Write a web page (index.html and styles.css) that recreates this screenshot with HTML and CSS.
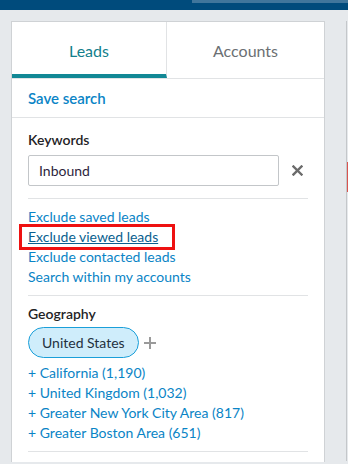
FILE: index.html
```html
<!DOCTYPE html>
<html lang="en">
<head>
  <meta charset="UTF-8" />
  <title>Lead search</title>
  <link rel="stylesheet" href="styles.css">
</head>
<body>
  <div class="topbar">
    <div class="topbar-strip"></div>
  </div>

  <div class="page">
    <div class="card">
      <div class="tabs">
        <div class="tab active">Leads</div>
        <div class="tab">Accounts</div>
      </div>

      <div class="save-row">
        <a class="save-link">Save search</a>
      </div>

      <div class="section keywords">
        <div class="label">Keywords</div>
        <div class="keyword-row">
          <input class="keyword-input" type="text" value="Inbound" />
          <svg class="clear-icon" width="11" height="11" viewBox="0 0 11 11">
            <path d="M1.5 1.5 L9.5 9.5 M9.5 1.5 L1.5 9.5" stroke="#6b6b6b" stroke-width="2.4" stroke-linecap="square" />
          </svg>
        </div>
      </div>

      <div class="section links">
        <a class="link">Exclude saved leads</a>
        <a class="link highlighted">Exclude viewed leads</a>
        <a class="link">Exclude contacted leads</a>
        <a class="link">Search within my accounts</a>
      </div>

      <div class="section geo">
        <div class="label">Geography</div>
        <div class="pill-row">
          <span class="pill">United States</span>
          <svg class="plus-icon" width="14" height="14" viewBox="0 0 14 14">
            <path d="M7 1 V13 M1 7 H13" stroke="#9a9a9a" stroke-width="2" />
          </svg>
        </div>
        <a class="link">+ California (1,190)</a>
        <a class="link">+ United Kingdom (1,032)</a>
        <a class="link">+ Greater New York City Area (817)</a>
        <a class="link">+ Greater Boston Area (651)</a>
      </div>
    </div>

    <div class="side-panel">
      <div class="side-badge"></div>
    </div>
  </div>
</body>
</html>
```

FILE: styles.css
```css
body {
  margin: 0;
  background-color: #e6e9ec;
  font-family: Lato, "Open Sans", sans-serif;
  overflow: hidden;
}
.topbar {
  height: 10px;
  background-color: #004b7c;
  display: flex;
}
.topbar-strip {
  margin-left: auto;
  width: 156px;
  height: 3px;
  background-color: #40769c;
}
.page {
  display: flex;
  align-items: flex-start;
  padding: 11px 0 0 11px;
}
.card {
  width: 312px;
  background: white;
  border: 1px solid #cfd2d5;
  border-bottom: none;
  height: 440px;
  flex-shrink: 0;
}
.tabs {
  display: flex;
  border-bottom: 1px solid #e1e3e5;
}
.tab {
  flex: 1;
  height: 56px;
  display: flex;
  align-items: center;
  justify-content: center;
  font-size: 16px;
  color: #6b6f73;
  box-sizing: border-box;
}
.tab.active {
  flex: 0 0 155px;
  color: #137f8c;
  border-right: 1px solid #e1e3e5;
  border-bottom: 4px solid #128895;
  padding-top: 4px;
}
.save-row {
  height: 38px;
  display: flex;
  align-items: center;
  padding-left: 16px;
  border-bottom: 1px solid #e1e3e5;
}
.save-link {
  font-size: 15px;
  font-weight: 600;
  color: #0a84c6;
}
.section {
  margin: 0 16px;
  border-bottom: 1px solid #e1e3e5;
}
.label {
  font-size: 14px;
  line-height: 20px;
  font-weight: 600;
  color: #1f2326;
}
.keywords {
  padding: 12px 0;
}
.keyword-row {
  display: flex;
  align-items: center;
  margin-top: 5px;
}
.keyword-input {
  width: 251px;
  height: 31px;
  box-sizing: border-box;
  border: 1px solid #c3c6c9;
  border-radius: 2px;
  padding: 0 10px;
  font-family: Lato, "Open Sans", sans-serif;
  font-size: 14px;
  color: #2d1f3d;
}
.clear-icon {
  margin-left: 13px;
}
.links {
  padding: 8px 0;
  display: flex;
  flex-direction: column;
  align-items: flex-start;
}
.link {
  font-size: 14px;
  line-height: 20px;
  color: #0a84c6;
}
.highlighted {
  color: #0a5f8f;
  text-decoration: underline;
  outline: 3px solid #ee1111;
  margin-left: -6px;
  padding: 0 14px 0 6px;
}
.geo {
  padding: 8px 0;
  display: flex;
  flex-direction: column;
  align-items: flex-start;
}
.pill-row {
  display: flex;
  align-items: center;
  margin: 3px 0 5px;
}
.pill {
  height: 31px;
  box-sizing: border-box;
  padding: 0 13px;
  display: flex;
  align-items: center;
  border: 1px solid #1a9fd9;
  border-radius: 16px;
  background-color: #cfedfb;
  font-size: 14px;
  color: #233140;
}
.plus-icon {
  margin-left: 4px;
}
.side-panel {
  margin-left: 21px;
  width: 1px;
  height: 440px;
  border-left: 1px solid #c4c7ca;
  flex-shrink: 0;
}
.side-badge {
  margin-top: 141px;
  width: 1px;
  height: 30px;
  background-color: #d9534f;
}
```
